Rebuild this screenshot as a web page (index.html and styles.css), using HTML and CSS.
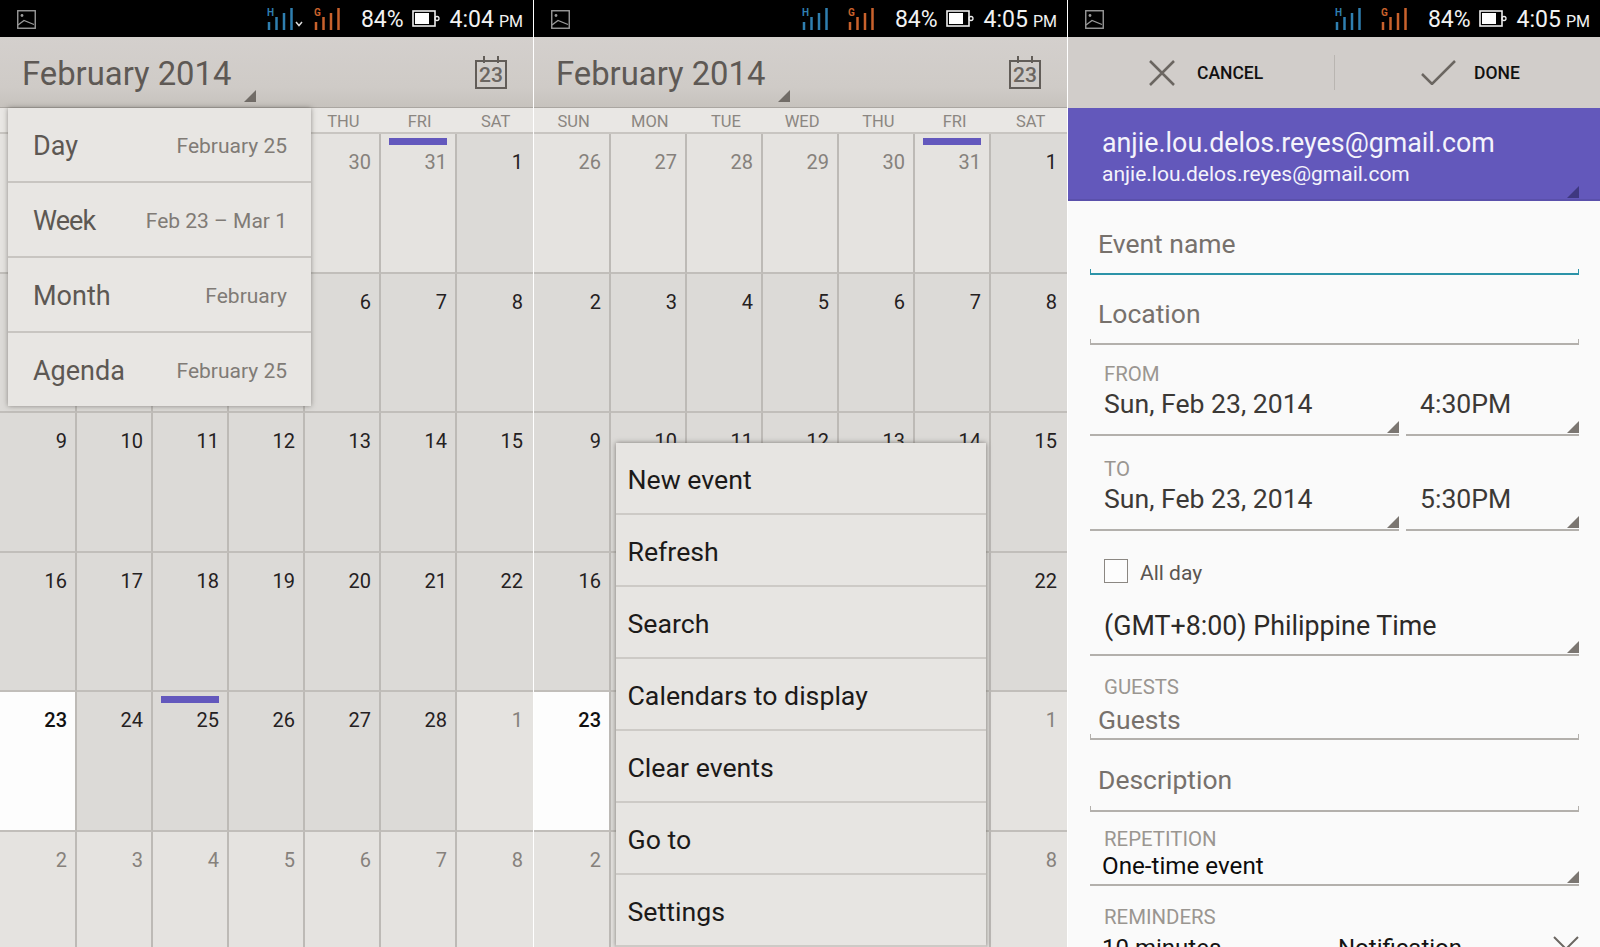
FILE: index.html
```html
<!DOCTYPE html>
<html lang="en">
<head>
<meta charset="utf-8">
<title>Calendar</title>
<link rel="stylesheet" href="styles.css">
</head>
<body>
<div class="screens">

  <section class="phone">
    <div class="status">
      <svg class="ic-img" viewBox="0 0 19 19"><rect x="0.75" y="0.75" width="17.5" height="17.5" fill="none" stroke="#9a9a9a" stroke-width="1.4"/><circle cx="5" cy="5.5" r="1.4" fill="#9a9a9a"/><path d="M1 15 L7 10.500 L17 14.500" fill="none" stroke="#9a9a9a" stroke-width="1.3"/></svg>
      <span class="status-fill"></span>
      <svg class="sig sig-chev" viewBox="0 0 36 22"><text x="0" y="8" class="sig-h">H</text><path d="M2 14v8M9.500 9v13M17 5v17M24.500 0v22" stroke="#2f7fb0" stroke-width="2.500"/><path d="M29 14l3 3.500 3-3.500" fill="none" stroke="#ddd" stroke-width="1.500"/></svg>
      <svg class="sig" viewBox="0 0 26 22"><text x="0" y="8" class="sig-g">G</text><path d="M2 14v8M9.500 9v13M17 5v17M24.500 0v22" stroke="#c9622c" stroke-width="2.500"/></svg>
      <span class="pct">84%</span>
      <svg class="batt" viewBox="0 0 28 17"><rect x="1" y="1" width="22" height="15" fill="none" stroke="#eee" stroke-width="1.600"/><rect x="3" y="3" width="14" height="11" fill="#fff"/><circle cx="25" cy="8.500" r="2" fill="none" stroke="#eee" stroke-width="1.300"/></svg>
      <span class="clock">4:04<small>PM</small></span>
    </div>
    <header class="bar">
      <h1 class="title">February 2014</h1>
      <span class="tri tri-title"></span>
      <div class="cal-ic"><span>23</span></div>
    </header>
    <div class="weekdays"><span>SUN</span><span>MON</span><span>TUE</span><span>WED</span><span>THU</span><span>FRI</span><span>SAT</span></div>
    <div class="month">
      <div class="cell out">26</div><div class="cell out">27</div><div class="cell out">28</div><div class="cell out">29</div><div class="cell out">30</div><div class="cell out"><i class="evt"></i>31</div><div class="cell">1</div>
      <div class="cell">2</div><div class="cell">3</div><div class="cell">4</div><div class="cell">5</div><div class="cell">6</div><div class="cell">7</div><div class="cell">8</div>
      <div class="cell">9</div><div class="cell">10</div><div class="cell">11</div><div class="cell">12</div><div class="cell">13</div><div class="cell">14</div><div class="cell">15</div>
      <div class="cell">16</div><div class="cell">17</div><div class="cell">18</div><div class="cell">19</div><div class="cell">20</div><div class="cell">21</div><div class="cell">22</div>
      <div class="cell today">23</div><div class="cell">24</div><div class="cell"><i class="evt"></i>25</div><div class="cell">26</div><div class="cell">27</div><div class="cell">28</div><div class="cell out">1</div>
      <div class="cell out">2</div><div class="cell out">3</div><div class="cell out">4</div><div class="cell out">5</div><div class="cell out">6</div><div class="cell out">7</div><div class="cell out">8</div>
    </div>
    <div class="views">
      <div class="view"><span class="view-name">Day</span><span class="view-range">February 25</span></div>
      <div class="view"><span class="view-name view-tight">Week</span><span class="view-range">Feb 23 – Mar 1</span></div>
      <div class="view"><span class="view-name">Month</span><span class="view-range">February</span></div>
      <div class="view"><span class="view-name">Agenda</span><span class="view-range">February 25</span></div>
    </div>
  </section>

  <section class="phone">
    <div class="status">
      <svg class="ic-img" viewBox="0 0 19 19"><rect x="0.75" y="0.75" width="17.5" height="17.5" fill="none" stroke="#9a9a9a" stroke-width="1.4"/><circle cx="5" cy="5.5" r="1.4" fill="#9a9a9a"/><path d="M1 15 L7 10.500 L17 14.500" fill="none" stroke="#9a9a9a" stroke-width="1.3"/></svg>
      <span class="status-fill"></span>
      <svg class="sig sig-wide" viewBox="0 0 26 22"><text x="0" y="8" class="sig-h">H</text><path d="M2 14v8M9.500 9v13M17 5v17M24.500 0v22" stroke="#2f7fb0" stroke-width="2.500"/></svg>
      <svg class="sig" viewBox="0 0 26 22"><text x="0" y="8" class="sig-g">G</text><path d="M2 14v8M9.500 9v13M17 5v17M24.500 0v22" stroke="#c9622c" stroke-width="2.500"/></svg>
      <span class="pct">84%</span>
      <svg class="batt" viewBox="0 0 28 17"><rect x="1" y="1" width="22" height="15" fill="none" stroke="#eee" stroke-width="1.600"/><rect x="3" y="3" width="14" height="11" fill="#fff"/><circle cx="25" cy="8.500" r="2" fill="none" stroke="#eee" stroke-width="1.300"/></svg>
      <span class="clock">4:05<small>PM</small></span>
    </div>
    <header class="bar">
      <h1 class="title">February 2014</h1>
      <span class="tri tri-title"></span>
      <div class="cal-ic"><span>23</span></div>
    </header>
    <div class="weekdays"><span>SUN</span><span>MON</span><span>TUE</span><span>WED</span><span>THU</span><span>FRI</span><span>SAT</span></div>
    <div class="month">
      <div class="cell out">26</div><div class="cell out">27</div><div class="cell out">28</div><div class="cell out">29</div><div class="cell out">30</div><div class="cell out"><i class="evt"></i>31</div><div class="cell">1</div>
      <div class="cell">2</div><div class="cell">3</div><div class="cell">4</div><div class="cell">5</div><div class="cell">6</div><div class="cell">7</div><div class="cell">8</div>
      <div class="cell">9</div><div class="cell">10</div><div class="cell">11</div><div class="cell">12</div><div class="cell">13</div><div class="cell">14</div><div class="cell">15</div>
      <div class="cell">16</div><div class="cell">17</div><div class="cell">18</div><div class="cell">19</div><div class="cell">20</div><div class="cell">21</div><div class="cell">22</div>
      <div class="cell today">23</div><div class="cell">24</div><div class="cell">25</div><div class="cell">26</div><div class="cell">27</div><div class="cell">28</div><div class="cell out">1</div>
      <div class="cell out">2</div><div class="cell out">3</div><div class="cell out">4</div><div class="cell out">5</div><div class="cell out">6</div><div class="cell out">7</div><div class="cell out">8</div>
    </div>
    <div class="menu">
      <div class="menu-item">New event</div>
      <div class="menu-item">Refresh</div>
      <div class="menu-item">Search</div>
      <div class="menu-item">Calendars to display</div>
      <div class="menu-item">Clear events</div>
      <div class="menu-item">Go to</div>
      <div class="menu-item">Settings</div>
    </div>
  </section>

  <section class="phone form-phone">
    <div class="status">
      <svg class="ic-img" viewBox="0 0 19 19"><rect x="0.75" y="0.75" width="17.5" height="17.5" fill="none" stroke="#9a9a9a" stroke-width="1.4"/><circle cx="5" cy="5.5" r="1.4" fill="#9a9a9a"/><path d="M1 15 L7 10.500 L17 14.500" fill="none" stroke="#9a9a9a" stroke-width="1.3"/></svg>
      <span class="status-fill"></span>
      <svg class="sig sig-wide" viewBox="0 0 26 22"><text x="0" y="8" class="sig-h">H</text><path d="M2 14v8M9.500 9v13M17 5v17M24.500 0v22" stroke="#2f7fb0" stroke-width="2.500"/></svg>
      <svg class="sig" viewBox="0 0 26 22"><text x="0" y="8" class="sig-g">G</text><path d="M2 14v8M9.500 9v13M17 5v17M24.500 0v22" stroke="#c9622c" stroke-width="2.500"/></svg>
      <span class="pct">84%</span>
      <svg class="batt" viewBox="0 0 28 17"><rect x="1" y="1" width="22" height="15" fill="none" stroke="#eee" stroke-width="1.600"/><rect x="3" y="3" width="14" height="11" fill="#fff"/><circle cx="25" cy="8.500" r="2" fill="none" stroke="#eee" stroke-width="1.300"/></svg>
      <span class="clock">4:05<small>PM</small></span>
    </div>
    <header class="actions">
      <div class="action action-cancel">
        <svg class="act-ic" viewBox="0 0 26 26"><path d="M1 1L25 25M25 1L1 25" fill="none" stroke="#6b6661" stroke-width="2.500"/></svg>
        <span>CANCEL</span>
      </div>
      <div class="action action-done">
        <svg class="act-ic act-check" viewBox="0 0 35 25"><path d="M1 14L11 24L34 1" fill="none" stroke="#6b6661" stroke-width="2.500"/></svg>
        <span>DONE</span>
      </div>
    </header>
    <div class="account">
      <div class="acc-main">anjie.lou.delos.reyes@gmail.com</div>
      <div class="acc-sub">anjie.lou.delos.reyes@gmail.com</div>
      <span class="tri tri-acc"></span>
    </div>
    <div class="form">
      <div class="input input-name focused"><span class="hint">Event name</span></div>
      <div class="input input-loc"><span class="hint">Location</span></div>

      <div class="dates dates-from">
        <div class="select"><span class="lab">FROM</span><span class="val">Sun, Feb 23, 2014</span></div>
        <div class="select select-time"><span class="lab">&nbsp;</span><span class="val">4:30PM</span></div>
      </div>
      <div class="dates dates-to">
        <div class="select"><span class="lab">TO</span><span class="val">Sun, Feb 23, 2014</span></div>
        <div class="select select-time"><span class="lab">&nbsp;</span><span class="val">5:30PM</span></div>
      </div>

      <label class="allday"><span class="check"></span><span class="allday-text">All day</span></label>

      <div class="select select-tz"><span class="val">(GMT+8:00) Philippine Time</span></div>

      <div class="input input-guests"><span class="lab lab-g">GUESTS</span><span class="hint">Guests</span></div>
      <div class="input input-desc"><span class="hint">Description</span></div>

      <div class="select select-rep"><span class="lab">REPETITION</span><span class="val val-rep">One-time event</span></div>

      <div class="reminders">
        <span class="lab">REMINDERS</span>
        <div class="rem-row">
          <span class="rem-a">10 minutes</span><span class="rem-b">Notification</span>
          <svg class="rem-x" viewBox="0 0 26 26"><path d="M1 1L25 25M25 1L1 25" fill="none" stroke="#6b6661" stroke-width="2"/></svg>
        </div>
      </div>
    </div>
  </section>
</div>
</body>
</html>
```

FILE: styles.css
```css
* { box-sizing: border-box; }
html, body { margin: 0; padding: 0; background: #fff; }
body { width: 1600px; height: 947px; overflow: hidden; font-family: Roboto, "Liberation Sans", sans-serif; }

.screens { display: grid; grid-template-columns: 533px 533px 532px; column-gap: 1px; height: 947px; }
.phone { position: relative; height: 947px; overflow: hidden; background: #dbd9d6; }

/* status bar */
.status { display: flex; align-items: center; height: 37px; background: #000; color: #f2f2f2; padding: 0 10px 0 17px; overflow: hidden; }
.ic-img { width: 19px; height: 19px; margin-top: 2px; flex: none; }
.status-fill { flex: 1; }
.sig { width: 26px; height: 22px; flex: none; margin-right: 21px; }
.sig-chev { width: 36px; margin-right: 11px; }
.sig-wide { margin-right: 20px; }
.sig-h { font: 700 10px Roboto, sans-serif; fill: #2f7fb0; }
.sig-g { font: 700 10px Roboto, sans-serif; fill: #c9622c; }
.pct { font-size: 23px; line-height: 32px; margin: 2px 8px 0 0; }
.batt { width: 28px; height: 17px; flex: none; margin-right: 10px; }
.clock { font-size: 23px; line-height: 32px; margin-top: 4px; white-space: nowrap; }
.clock small { font-size: 16px; margin-left: 5px; }

/* title bar */
.bar { position: relative; display: flex; align-items: center; justify-content: space-between; height: 71px; padding: 2px 26px 0 22px; background: linear-gradient(#d4d0cd, #cfcbc7 70%, #c6c2bd); box-shadow: inset 0 -1px 0 #aaa6a1; }
.title { margin: 0; font-size: 32.800px; font-weight: 400; color: #5e5955; white-space: nowrap; }
.tri { position: absolute; display: block; width: 12px; height: 12px; background: #716c67; clip-path: polygon(100% 0, 100% 100%, 0 100%); }
.tri-title { left: 244px; top: 53px; }
.cal-ic { position: relative; width: 32px; height: 29px; margin-top: 2px; border: 2px solid #625d58; text-align: center; }
.cal-ic::before, .cal-ic::after { content: ""; position: absolute; top: -6px; width: 2px; height: 7px; background: #625d58; }
.cal-ic::before { left: 6px; }
.cal-ic::after { right: 6px; }
.cal-ic span { display: block; font-size: 21px; font-weight: 500; line-height: 26px; color: #6b6661; }

/* week header */
.weekdays { display: grid; grid-template-columns: repeat(7, 76.200px); height: 26px; padding-left: 0.500px; background: #e9e7e4; border-bottom: 2px solid #c8c5c1; }
.phone:nth-child(2) .weekdays { padding-left: 1.500px; }
.weekdays span { font-size: 16.500px; line-height: 28px; height: 24px; text-align: center; color: #8b8681; }

/* month grid */
.month { display: grid; grid-template-columns: 77px repeat(6, 76px); grid-auto-rows: 139.500px; }
.cell { position: relative; padding: 16px 8px 0 0; text-align: right; font-size: 20px; line-height: 24px; color: #25211f; background: #dcdad7; border-right: 2px solid #bdbab6; border-bottom: 2px solid #c1beba; }
.cell:nth-child(7n) { border-right: 0; padding-right: 10px; }
.cell.out { background: #e5e3e0; color: #86817c; }
.cell.today { background: #fdfdfd; color: #111; font-weight: 500; }
.evt { position: absolute; top: 4px; right: 8px; width: 58px; height: 6.500px; background: #6358bd; }

/* view drop-down */
.views { position: absolute; left: 8px; top: 108px; width: 303px; background: #e8e6e3; box-shadow: 0 0 5px rgba(70, 65, 60, .55); }
.view { display: flex; align-items: center; justify-content: space-between; height: 75px; padding: 3px 24px 0 25px; border-bottom: 2px solid #c8c5c1; }
.view:last-child { height: 73px; border-bottom: 0; }
.view-name { font-size: 27px; color: #5d5853; }
.view-tight { letter-spacing: -0.900px; }
.view-range { font-size: 21px; color: #807b76; }

/* overflow menu */
.menu { position: absolute; left: 82px; top: 443px; width: 370px; background: #e7e5e2; box-shadow: 0 0 5px rgba(70, 65, 60, .65); }
.menu-item { display: flex; align-items: center; height: 72px; padding: 3px 12px 0 11.500px; font-size: 26.700px; color: #1c1a19; border-bottom: 2px solid #cdcac6; }

/* form phone */
.form-phone { background: #fafafa; }
.actions { display: grid; grid-template-columns: 267px 1fr; height: 71px; background: #d1cdca; }
.action { display: flex; align-items: center; font-size: 17.500px; font-weight: 500; color: #111; position: relative; }
.action-cancel { padding-left: 81px; gap: 22px; }
.action-done { padding-left: 86px; gap: 18px; }
.action-cancel::after { content: ""; position: absolute; right: 0; top: 18px; height: 35px; width: 1px; background: #b9b5b1; }
.act-ic { width: 26px; height: 26px; flex: none; }
.act-check { width: 35px; height: 25px; }

.account { position: relative; height: 93px; background: #6358bb; color: #f4f3fb; padding: 18px 0 0 34px; box-shadow: inset 0 -2px 0 #5a50ab; }
.acc-main { font-size: 26.800px; line-height: 34px; }
.acc-sub { font-size: 21px; line-height: 29px; }
.tri-acc { right: 21px; top: 78px; background: #3f3880; }

.form { padding: 0 21px 0 22px; }
.input { position: relative; display: flex; flex-direction: column; justify-content: flex-end; padding: 0 0 15px 8px; }
.input::after { content: ""; position: absolute; left: 0; right: 0; bottom: 0; height: 4px; border: 1px solid #b3b0ac; border-top: 0; border-bottom-width: 2px; }
.input.focused::after { border-color: #2c93a8; }
.hint { font-size: 26.500px; line-height: 32px; color: #77716c; }
.input-name { height: 74px; }
.input-loc { height: 70px; }
.input-guests { height: 84px; padding-bottom: 4px; }
.input-desc { height: 72px; padding-bottom: 16px; }
.lab-g { margin: 0 0 5px 6px; }
.lab { display: block; font-size: 20.400px; line-height: 24px; color: #9a9691; }
.val { display: block; font-size: 26.600px; line-height: 32px; color: #3c3936; }

.dates { display: grid; grid-template-columns: 309px 1fr; column-gap: 7px; }
.dates-from { height: 91px; }
.dates-to { height: 95px; }
.select { position: relative; display: flex; flex-direction: column; justify-content: flex-end; padding: 0 0 14px 14px; border-bottom: 2px solid #b3b0ac; }
.select::after { content: ""; position: absolute; right: 0; bottom: 1px; width: 12px; height: 12px; background: #7b7671; clip-path: polygon(100% 0, 100% 100%, 0 100%); }
.select .lab { margin-bottom: 2px; }
.select-time { padding-left: 14px; }

.allday { display: flex; align-items: center; gap: 12px; height: 65px; padding: 15px 0 0 14px; font-size: 21px; color: #5a5551; }
.allday .check { width: 24px; height: 24px; border: 1.500px solid #8b8782; background: #fdfdfd; }
.allday-text { margin-top: 3px; }

.select-tz { height: 60px; padding-bottom: 12px; }
.select-tz .val { font-size: 26.800px; color: #2d2a28; }

.select-rep { height: 74px; padding-bottom: 4px; }
.select-rep .lab { margin: 0 0 1px 0; }
.val-rep { line-height: 28px; margin-left: -2px; font-size: 24.200px; color: #0c0b0b; }

.reminders { padding: 19px 0 0 14px; }
.rem-row { position: relative; display: flex; font-size: 24px; line-height: 28px; color: #141312; margin-top: 5px; }
.rem-a { width: 236px; margin-left: -2px; }
.rem-x { position: absolute; right: 0; top: 2px; width: 26px; height: 26px; }
```
